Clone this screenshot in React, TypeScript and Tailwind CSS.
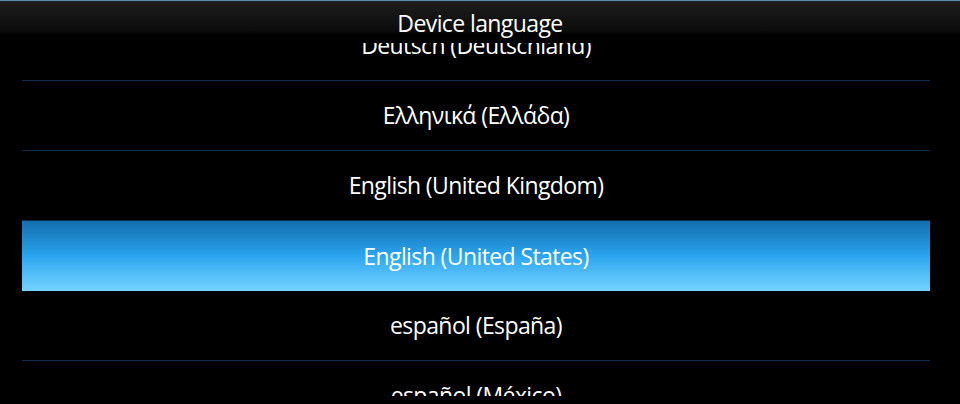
const languages = [
  'Deutsch (Deutschland)',
  'Ελληνικά (Ελλάδα)',
  'English (United Kingdom)',
  'English (United States)',
  'español (España)',
  'español (México)',
]

const selected = 'English (United States)'

export default function App() {
  return (
    <div className="w-[960px] h-[404px] bg-black text-white font-['Open_Sans',sans-serif] overflow-hidden">
      <div className="relative h-[396px] overflow-hidden">
        <div className="pt-[11px]">
          {languages.map((lang) => {
            const isSel = lang === selected
            return (
              <div key={lang} className="pl-[22px] pr-[30px]">
                {isSel ? (
                  <div className="h-[70px] flex items-center justify-center bg-gradient-to-b from-[#136fae] via-[#2aa5ef] to-[#72d4ff] text-[23px] tracking-[-0.6px]">
                    {lang}
                  </div>
                ) : (
                  <div className="h-[70px] flex items-center justify-center border-b border-[#0d2d4c] text-[23px] tracking-[-0.6px]">
                    {lang}
                  </div>
                )}
              </div>
            )
          })}
        </div>
        {/* title bar sits over the scrolled list */}
        <div className="absolute top-0 left-0 right-0 h-[43px] bg-gradient-to-b from-[#1e1e1e] via-[#0c0c0c] via-70% to-black border-t border-[#5a8db3] flex justify-center">
          <span className="text-[23px] tracking-[-0.6px] leading-none pt-[11px]">Device language</span>
        </div>
      </div>
    </div>
  )
}
